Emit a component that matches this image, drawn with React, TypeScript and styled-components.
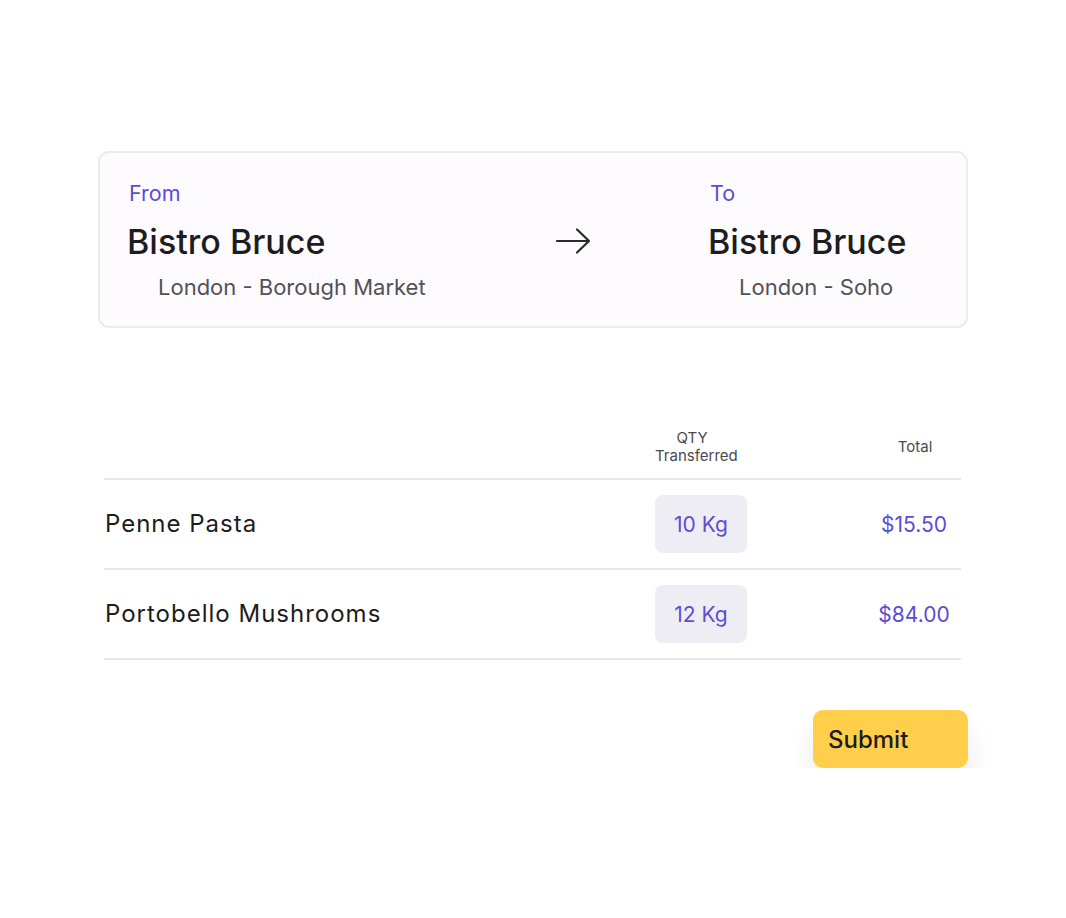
import React from 'react'
import styled, { createGlobalStyle } from 'styled-components'

const GlobalStyle = createGlobalStyle`
  html, body {
    margin: 0;
    padding: 0;
    background: #ffffff;
    font-family: Inter, "Noto Sans", sans-serif;
    color: #1c1b1f;
  }
`

const Page = styled.div`
  width: 870px;
  padding: 151px 0 0 98px;
`

const TransferCard = styled.div`
  display: flex;
  align-items: flex-start;
  padding: 28px 20px 27px 27px;
  background: #fdfbfe;
  border: 2px solid #ecebf1;
  border-radius: 11px;
`

const Place = styled.div<{ $width?: number }>`
  display: flex;
  flex-direction: column;
  width: ${({ $width }) => ($width ? `${$width}px` : 'auto')};
`

const Label = styled.div`
  font-size: 21.5px;
  line-height: 24px;
  color: #5a4dd6;
  padding-left: 2px;
`

const Venue = styled.div`
  margin-top: 17px;
  font-size: 34px;
  line-height: 40px;
  font-weight: 500;
  color: #1d1c20;
`

const Location = styled.div`
  margin-top: 13px;
  padding-left: 31px;
  font-size: 22px;
  line-height: 24px;
  color: #535158;
`

const ArrowBox = styled.div`
  width: 36px;
  height: 28px;
  margin-top: 46px;
  margin-right: 116px;
  color: #2a292d;
`

const Table = styled.div`
  margin: 0 7px 0 6px;
  padding-top: 101px;
`

const Row = styled.div<{ $head?: boolean }>`
  display: grid;
  grid-template-columns: 1fr 92px 92px;
  column-gap: 122px;
  align-items: center;
  border-bottom: 2px solid #e7e6ea;
  padding: ${({ $head }) => ($head ? '0 0 13px' : '15px 0 15px')};
`

const HeadCell = styled.div<{ $shift?: number }>`
  font-size: 15px;
  line-height: 18px;
  color: #4a494e;
  text-align: center;
  padding-right: ${({ $shift }) => $shift || 0}px;
`

const ItemName = styled.div`
  font-size: 24px;
  line-height: 28px;
  letter-spacing: 1px;
  color: #1d1c20;
  padding-left: 1px;
`

const QtyBadge = styled.div`
  height: 58px;
  border-radius: 8px;
  background: #efedf4;
  display: flex;
  align-items: center;
  justify-content: center;
  font-size: 21px;
  color: #5a4dd6;
`

const Price = styled.div`
  font-size: 21px;
  color: #5a4dd6;
  text-align: center;
  padding-right: 2px;
`

const Footer = styled.div`
  display: flex;
  justify-content: flex-end;
  padding-top: 50px;
`

const SubmitButton = styled.button`
  width: 155px;
  height: 58px;
  border: none;
  border-radius: 10px;
  background: #ffcf4b;
  color: #1d1c20;
  font-family: Inter, "Noto Sans", sans-serif;
  font-size: 24px;
  font-weight: 500;
  text-align: left;
  padding: 0 0 0 15px;
  box-shadow: 0 20px 28px rgba(60, 50, 90, 0.1);
  cursor: pointer;
`

const items = [
  { name: 'Penne Pasta', qty: '10 Kg', total: '$15.50' },
  { name: 'Portobello Mushrooms', qty: '12 Kg', total: '$84.00' },
]

const Arrow = () => (
  <svg width="36" height="28" viewBox="0 0 36 28" fill="none">
    <path d="M1 14h32M21 2.5l12 11.5L21 25.5" stroke="currentColor" strokeWidth="2.2" strokeLinecap="round" strokeLinejoin="round" />
  </svg>
)

const App: React.FC = () => {
  return (
    <>
      <GlobalStyle />
      <Page>
        <TransferCard>
          <Place $width={429}>
            <Label>From</Label>
            <Venue>Bistro Bruce</Venue>
            <Location>London - Borough Market</Location>
          </Place>
          <ArrowBox>
            <Arrow />
          </ArrowBox>
          <Place>
            <Label>To</Label>
            <Venue>Bistro Bruce</Venue>
            <Location>London - Soho</Location>
          </Place>
        </TransferCard>

        <Table>
          <Row $head>
            <div />
            <HeadCell $shift={18}>
              QTY
              <br />
              Transferred
            </HeadCell>
            <HeadCell>Total</HeadCell>
          </Row>
          {items.map((item) => (
            <Row key={item.name}>
              <ItemName>{item.name}</ItemName>
              <QtyBadge>{item.qty}</QtyBadge>
              <Price>{item.total}</Price>
            </Row>
          ))}
        </Table>

        <Footer>
          <SubmitButton>Submit</SubmitButton>
        </Footer>
      </Page>
    </>
  )
}

export default App
